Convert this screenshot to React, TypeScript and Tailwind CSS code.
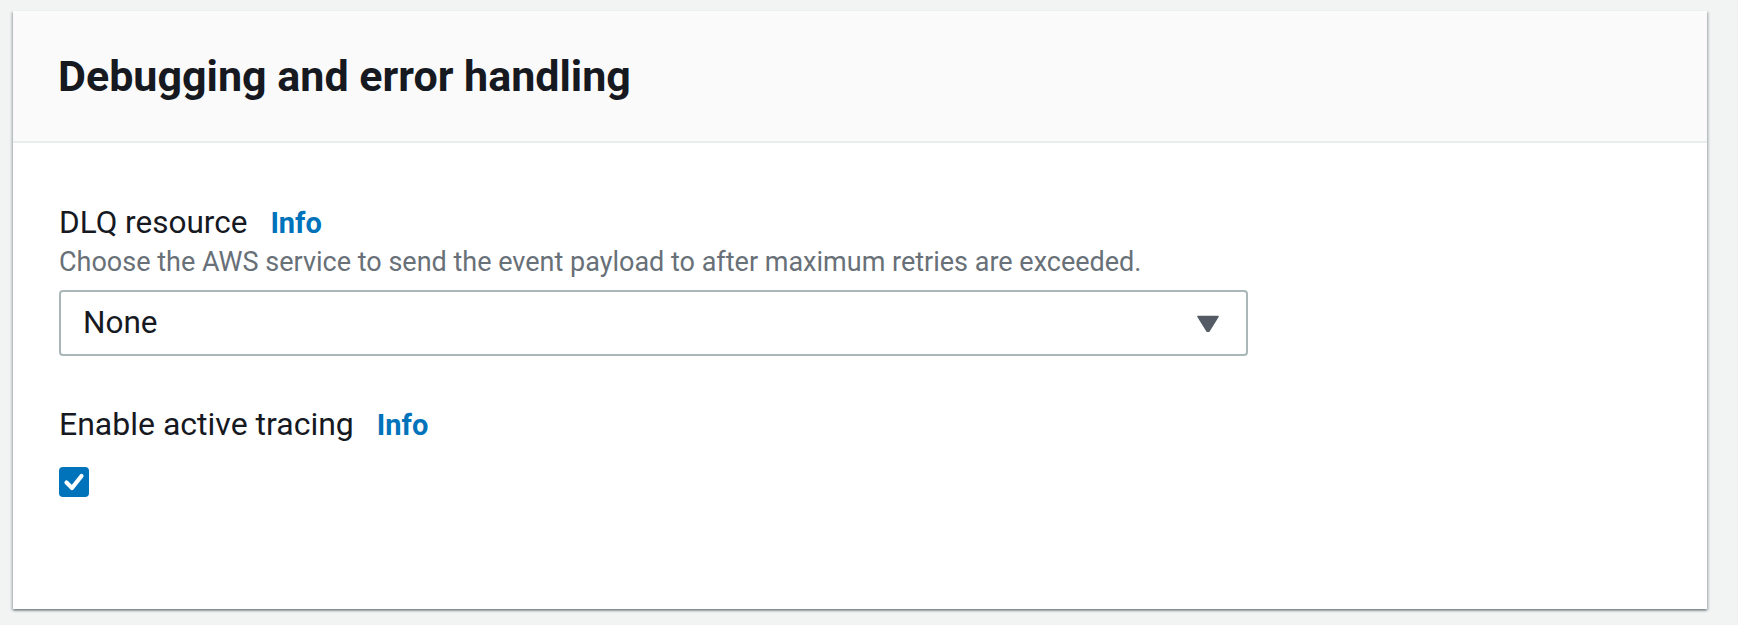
import React, { useState } from 'react';

const font = { fontFamily: 'Roboto, "Open Sans", Arial, sans-serif' };

function InfoLink() {
  return (
    <a href="#" className="ml-[23px] text-[29px] font-bold text-[#0073bb] no-underline">
      Info
    </a>
  );
}

export default function App() {
  const [tracing, setTracing] = useState(true);

  return (
    <div className="min-h-[625px] w-full bg-[#f2f3f3] pt-[11px] pl-[13px] pr-[31px]" style={font}>
      <div className="w-[1694px] bg-white shadow-[0_2px_2px_0_rgba(0,28,36,0.35),2px_1px_2px_0_rgba(0,28,36,0.15),-2px_1px_2px_0_rgba(0,28,36,0.15)]">
        <div className="flex h-[132px] items-center border-b-2 border-[#eaeded] bg-[#fafafa] pl-[45px]">
          <h2 className="text-[43px] font-bold leading-[50px] text-[#16191f]">Debugging and error handling</h2>
        </div>

        <div className="pt-[60px] pb-[112px] pl-[46px]">
          <div className="flex items-baseline text-[31.5px] leading-[40px] text-[#16191f]">
            <span>DLQ resource</span>
            <InfoLink />
          </div>
          <p className="text-[27px] leading-[38px] text-[#687078]">
            Choose the AWS service to send the event payload to after maximum retries are exceeded.
          </p>
          <div className="mt-[9px] flex h-[66px] w-[1189px] items-center justify-between rounded-[4px] border-2 border-[#aab7b8] bg-white pl-[22px] pr-[27px]">
            <span className="text-[31.5px] text-[#16191f]">None</span>
            <svg width="22" height="17" viewBox="0 0 22 17">
              <path d="M1 1.5 L21 1.5 L12 16 Q11 17 10 16 Z" fill="#545b64" stroke="#545b64" strokeWidth="1.5" strokeLinejoin="round" />
            </svg>
          </div>

          <div className="mt-[48px] flex items-baseline text-[32px] leading-[40px] text-[#16191f]">
            <span>Enable active tracing</span>
            <InfoLink />
          </div>
          <button
            onClick={() => setTracing(!tracing)}
            className={`mt-[22px] flex h-[30px] w-[30px] items-center justify-center rounded-[4px] ${
              tracing ? 'bg-[#0073bb]' : 'border-2 border-[#aab7b8] bg-white'
            }`}
          >
            {tracing && (
              <svg width="24" height="24" viewBox="0 0 24 24">
                <path d="M4.5 12.5 L10 18 L19.5 6" fill="none" stroke="white" strokeWidth="4.2" strokeLinecap="round" strokeLinejoin="round" />
              </svg>
            )}
          </button>
        </div>
      </div>
    </div>
  );
}
